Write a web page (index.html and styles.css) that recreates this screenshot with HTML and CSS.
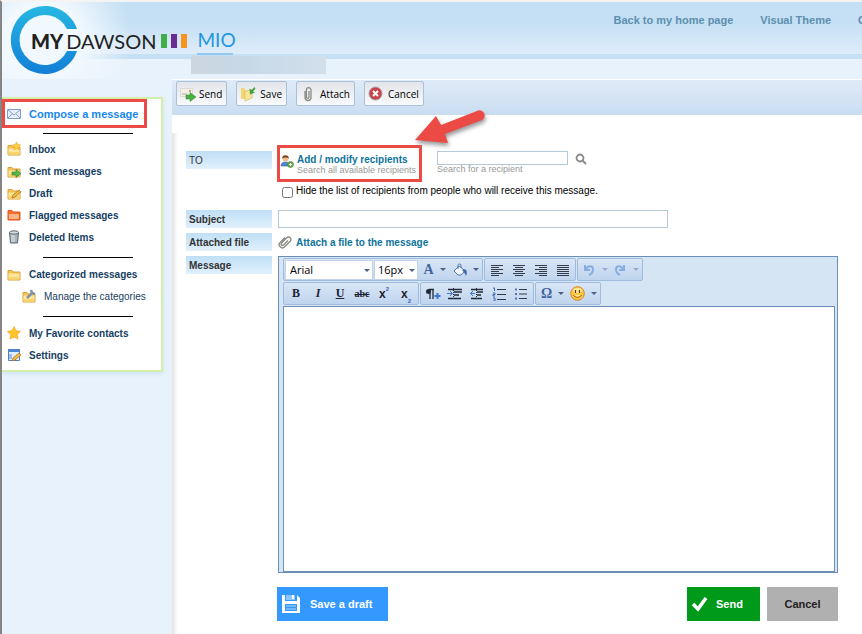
FILE: index.html
```html
<!DOCTYPE html>
<html lang="en">

<head>
  <meta charset="UTF-8">
  <title>MIO</title>
  <link rel="stylesheet" href="styles.css">
</head>

<body>
  <!-- shared icons -->
  <svg class="defs" width="0" height="0" aria-hidden="true">
    <symbol id="folder" viewBox="0 0 14 14">
      <path d="M1 3.500h4l1 1.500h7v8H1z" fill="#f6c451" stroke="#dba03a" />
      <path d="M1.500 6.500h11v6h-11z" fill="#fde69c" />
      <path d="M2 10h10v2H2z" fill="#f9d36c" />
    </symbol>
    <symbol id="clip" viewBox="0 0 16 16">
      <path d="M5 5v6.500a3 3 0 0 0 6 0V4a2.300 2.300 0 0 0-4.600 0v7a1.300 1.300 0 0 0 2.600 0V5" fill="none" stroke="#8b8b84" stroke-width="1.300" />
    </symbol>
    <symbol id="left" viewBox="0 0 14 14"><path d="M1 2.500h12M1 4.500h8M1 6.500h12M1 8.500h8M1 10.500h12M1 12.500h8" stroke="#333b4a" /></symbol>
    <symbol id="center" viewBox="0 0 14 14"><path d="M1 2.500h12M3 4.500h8M1 6.500h12M3 8.500h8M1 10.500h12M3 12.500h8" stroke="#333b4a" /></symbol>
    <symbol id="right" viewBox="0 0 14 14"><path d="M1 2.500h12M5 4.500h8M1 6.500h12M5 8.500h8M1 10.500h12M5 12.500h8" stroke="#333b4a" /></symbol>
    <symbol id="full" viewBox="0 0 14 14"><path d="M1 2.500h12M1 4.500h12M1 6.500h12M1 8.500h12M1 10.500h12M1 12.500h12" stroke="#333b4a" /></symbol>
    <symbol id="undo" viewBox="0 0 14 14"><path d="M3 2v5h5M3.500 6.500C6 2 11 2.500 11 6.500c0 3-2 4.500-4 5.500" fill="none" stroke="#86aee2" stroke-width="2" /></symbol>
  </svg>

  <header class="header">
    <div class="logo">
      <svg class="ring" width="70" height="70" viewBox="0 0 70 70" aria-hidden="true">
        <defs>
          <linearGradient id="ringFill" x1="0" y1="0" x2="0" y2="1">
            <stop offset="0" stop-color="#27b7e3" />
            <stop offset="1" stop-color="#127fd6" />
          </linearGradient>
        </defs>
        <circle cx="34" cy="34" r="26" fill="#f1f8fe" opacity=".6" />
        <path d="M67 23A34 34 0 1 0 67 45H57A25 25 0 1 1 57 23Z" fill="url(#ringFill)" />
      </svg>
      <div class="wordmark">
        <b>MY</b><span>DAWSON</span>
        <i class="bar green"></i><i class="bar purple"></i><i class="bar orange"></i>
      </div>
    </div>
    <div class="app">
      <h1 class="app-name">MIO</h1>
      <div class="user"></div>
    </div>
    <nav class="top-nav">
      <a href="#">Back to my home page</a>
      <a href="#">Visual Theme</a>
      <a href="#">C</a>
    </nav>
  </header>

  <div class="layout">
    <aside class="sidebar">
      <a class="item compose" href="#">
        <svg width="14" height="14" viewBox="0 0 14 14"><path d="M.5 2.500h13v9H.5z" fill="#e6effa" stroke="#7f9fca" /><path d="M1 3l6 5 6-5M1 11l4-4M13 11L9 7" fill="none" stroke="#7f9fca" /></svg>
        Compose a message
      </a>
      <hr>
      <a class="item" href="#">
        <svg width="14" height="14"><use href="#folder" /><path d="M9.500 0l1.300 2.500 2.900.4-2.100 2 .5 2.900-2.600-1.400L7 7.800l.5-2.900-2.100-2 2.900-.4z" fill="#ffd23f" stroke="#e0a020" stroke-width=".5" /></svg>
        Inbox
      </a>
      <a class="item" href="#">
        <svg width="14" height="14"><use href="#folder" /><path d="M5 8h4V5.500l5 4-5 4V11H5z" fill="#55b848" stroke="#2f7d2b" stroke-width=".6" /></svg>
        Sent messages
      </a>
      <a class="item" href="#">
        <svg width="14" height="14"><use href="#folder" /><path d="M5 12l1-3 6-5 2 2-6 5z" fill="#f5b942" stroke="#a86f20" stroke-width=".7" /></svg>
        Draft
      </a>
      <a class="item" href="#">
        <svg width="14" height="14" viewBox="0 0 14 14"><path d="M1 2.500h4l1 1.500h7v8H1z" fill="#f8702d" stroke="#e5531b" /><path d="M2 6h10v5H2z" fill="#ffb58a" /></svg>
        Flagged messages
      </a>
      <a class="item" href="#">
        <svg width="14" height="14" viewBox="0 0 14 14"><path d="M2.500 2.500l1 10.500h7l1-10.500z" fill="#aab4bd" stroke="#5c6670" /><path d="M5 4v8M7 4v8" stroke="#dfe5ea" /><ellipse cx="7" cy="2.500" rx="4.500" ry="1.700" fill="#d5dce2" stroke="#5c6670" /></svg>
        Deleted Items
      </a>
      <hr>
      <a class="item" href="#">
        <svg width="14" height="14"><use href="#folder" /></svg>
        Categorized messages
      </a>
      <a class="item sub" href="#">
        <svg width="14" height="14"><use href="#folder" /><path d="M5 9l5-5M9 1l1 3 3 1" stroke="#8492a3" stroke-width="2.500" fill="none" /></svg>
        Manage the categories
      </a>
      <hr>
      <a class="item" href="#">
        <svg width="14" height="14" viewBox="0 0 14 14"><path d="M7 .5l2 4.200 4.600.6-3.400 3.200.9 4.600L7 10.900l-4.100 2.200.9-4.600L.4 5.300 5 4.700z" fill="#ffc629" stroke="#f0a41c" stroke-width=".7" /></svg>
        My Favorite contacts
      </a>
      <a class="item" href="#">
        <svg width="14" height="14" viewBox="0 0 14 14"><path d="M1.500 1.500h11v11h-11z" fill="#e4eefb" stroke="#4f7fc0" /><path d="M1 1h12v3H1z" fill="#4f86cf" /><path d="M2 6h3v5H2z" fill="#9dbde8" /><path d="M5 13l1-3 6-5 2 2-6 5z" fill="#f5b942" stroke="#a86f20" stroke-width=".7" /></svg>
        Settings
      </a>
    </aside>

    <main class="main">
      <div class="toolbar">
        <button type="button">
          <svg width="16" height="16" viewBox="0 0 16 16"><path d="M.5 2.500h12v8H.5z" fill="#f4f0e6" stroke="#dedacf" /><path d="M9 4h2v2H9z" fill="#b9a97e" /><path d="M2 8h5" stroke="#aaa" /><path d="M6 9h4V6.500l6 4.500-6 4.500V13H6z" fill="#4aae45" stroke="#2e8a2c" stroke-width=".5" /></svg>
          Send
        </button>
        <button type="button" class="wide">
          <svg width="16" height="16" viewBox="0 0 16 16"><path d="M1 2h4v11H1z" fill="#f4d675" /><path d="M5 5l7-1v8l-7 3z" fill="#f8e59c" stroke="#d9b451" stroke-width=".6" /><path d="M14.500 1l-3 3-2-1.500.5 6L15 6.500 13 5.500l2.500-3z" fill="#3fa23b" /></svg>
          Save
        </button>
        <button type="button" class="wide">
          <svg width="16" height="16"><use href="#clip" /></svg>
          Attach
        </button>
        <button type="button" class="wide">
          <svg width="16" height="16" viewBox="0 0 16 16"><circle cx="7.500" cy="7.500" r="6.500" fill="#c9444a" stroke="#a9a0a5" /><path d="M5 5l5 5M10 5l-5 5" stroke="#fff" stroke-width="2" /></svg>
          Cancel
        </button>
      </div>

      <form class="form">
        <div class="label to">TO</div>
        <div class="recipients">
          <div class="recipient-row">
            <a class="add" href="#">
              <svg width="14" height="14" viewBox="0 0 14 14"><path d="M1 12c0-3 2-4 4.500-4S10 9 10 12z" fill="#4d86d1" stroke="#2d5fa5" stroke-width=".6" /><circle cx="5.500" cy="4.500" r="3" fill="#f2bd8c" /><path d="M2 4.500C2 0 9 0 9 4.500 7 3 4 3 2 4.500z" fill="#7b451f" /><circle cx="10.500" cy="10.500" r="3" fill="#6cab4c" stroke="#457f2c" stroke-width=".6" /><path d="M10.500 9v3M9 10.500h3" stroke="#fff" /></svg>
              <span>
                <strong>Add / modify recipients</strong>
                <small>Search all available recipients</small>
              </span>
            </a>
            <svg class="arrow" width="74" height="40" viewBox="0 0 74 40" aria-hidden="true">
              <path d="M1 31L22 7l5 9L63 2a5 5 0 0 1 5 9L31 25l3 9z" fill="#ec4a44" />
            </svg>
            <div class="search">
              <input type="text" id="search">
              <label for="search">Search for a recipient</label>
            </div>
            <button type="button" class="search-button" aria-label="Search">
              <svg width="12" height="12" viewBox="0 0 12 12"><circle cx="5" cy="5" r="3.500" fill="none" stroke="#8b8b8b" stroke-width="1.800" /><path d="M7.500 7.500L11 11" stroke="#8b8b8b" stroke-width="2" /></svg>
            </button>
          </div>
          <label class="hide-list"><input type="checkbox"> Hide the list of recipients from people who will receive this message.</label>
        </div>

        <label class="label" for="subject">Subject</label>
        <div><input class="subject" type="text" id="subject"></div>

        <div class="label">Attached file</div>
        <a class="attach" href="#">
          <svg width="14" height="14" viewBox="0 0 16 16"><g transform="rotate(45 8 8) translate(-1.600 -1.600) scale(1.200)"><use href="#clip" width="16" height="16" /></g></svg>
          Attach a file to the message
        </a>

        <label class="label" for="message">Message</label>
        <div class="editor">
          <div class="tools">
            <div class="group">
              <span class="combo"><select class="font" aria-label="Font"><option>Arial</option></select></span>
              <span class="combo"><select class="size" aria-label="Size"><option>16px</option></select></span>
              <button type="button" class="tool drop"><b class="fore">A</b></button>
              <button type="button" class="tool drop" aria-label="Fill"><svg width="14" height="14" viewBox="0 0 14 14"><path d="M6 3L1 8l4 4h3l4-4z" fill="#f3f7fd" stroke="#5775a8" /><path d="M5 6V2.500a1.500 1.500 0 0 1 3 0V5" fill="none" stroke="#5775a8" /><path d="M9 7c4-2 6 1 4 6-1-2-1-3-4-6z" fill="#4067ac" /></svg></button>
            </div>
            <div class="group">
              <button type="button" class="tool" aria-label="Left"><svg width="14" height="14"><use href="#left" /></svg></button>
              <button type="button" class="tool" aria-label="Center"><svg width="14" height="14"><use href="#center" /></svg></button>
              <button type="button" class="tool" aria-label="Right"><svg width="14" height="14"><use href="#right" /></svg></button>
              <button type="button" class="tool" aria-label="Justify"><svg width="14" height="14"><use href="#full" /></svg></button>
            </div>
            <div class="group">
              <button type="button" class="tool drop off" aria-label="Undo"><svg width="14" height="14"><use href="#undo" /></svg></button>
              <button type="button" class="tool drop off" aria-label="Redo"><svg class="flip" width="14" height="14"><use href="#undo" /></svg></button>
            </div>
          </div>
          <div class="tools">
            <div class="group">
              <button type="button" class="tool"><b>B</b></button>
              <button type="button" class="tool"><b><i>I</i></b></button>
              <button type="button" class="tool"><b><u>U</u></b></button>
              <button type="button" class="tool small"><s>abc</s></button>
              <button type="button" class="tool script">x<sup>2</sup></button>
              <button type="button" class="tool script">x<sub>2</sub></button>
            </div>
            <div class="group">
              <button type="button" class="tool" aria-label="Paragraph"><svg width="16" height="14" viewBox="0 0 16 14"><path d="M5 2v10M8 2v10M4 2.500h5" stroke="#222b3a" stroke-width="1.300" /><circle cx="3.500" cy="4.500" r="2.500" fill="#222b3a" /><path d="M12.500 6v6M9.500 9h6" stroke="#3a76d6" stroke-width="2" /></svg></button>
              <button type="button" class="tool" aria-label="Indent"><svg width="16" height="14" viewBox="0 0 16 14"><path d="M1 2.500h14M7 5h8M7 8h5M1 11.500h13" stroke="#222b3a" stroke-width="1.500" /><path d="M6.500 1v12" stroke="#222b3a" stroke-dasharray="1 1" /><path d="M0 6.500h5M3 4l2.500 2.500L3 9" stroke="#3a76d6" fill="none" /></svg></button>
              <button type="button" class="tool" aria-label="Outdent"><svg width="16" height="14" viewBox="0 0 16 14"><path d="M2 2.500h12M8 5h6M8 8h4M2 11.500h11" stroke="#222b3a" stroke-width="1.500" /><path d="M7.500 1v12" stroke="#222b3a" stroke-dasharray="1 1" /><path d="M1 6.500h5M4 4L1.500 6.500 4 9" stroke="#3a76d6" fill="none" /></svg></button>
              <button type="button" class="tool" aria-label="Numbered list"><svg width="14" height="14" viewBox="0 0 14 14"><path d="M5 2.500h9M5 7.500h9M5 12.500h9" stroke="#333b4a" /><path d="M1 1h1.500v3M1 6h2v1.500H1V9h2M1 11h2v3H1" stroke="#3a66b5" fill="none" /></svg></button>
              <button type="button" class="tool" aria-label="Bullet list"><svg width="14" height="14" viewBox="0 0 14 14"><path d="M5 2.500h8M5 7h8M5 11.500h8" stroke="#333b4a" /><path d="M1 1.500h2v2H1zM1 6h2v2H1zM1 10.500h2v2H1z" fill="#5a73b5" /></svg></button>
            </div>
            <div class="group">
              <button type="button" class="tool drop"><b class="omega">Ω</b></button>
              <button type="button" class="tool drop" aria-label="Smiley"><svg width="15" height="15" viewBox="0 0 15 15"><circle cx="7.500" cy="7.500" r="6.800" fill="#fcc93c" stroke="#d9842a" /><ellipse cx="7.500" cy="4.500" rx="4.500" ry="2.500" fill="#ffe893" /><path d="M5.500 4v3M9.500 4v3" stroke="#5a3a1a" stroke-width="1.200" /><path d="M3.500 9c1 3 7 3 8 0" fill="#ffe893" stroke="#a5541c" /></svg></button>
            </div>
          </div>
          <textarea id="message"></textarea>
        </div>

        <div class="actions">
          <button type="button" class="action draft">
            <svg width="18" height="18" viewBox="0 0 18 18"><path d="M0 0h3v6h12V0l3 3v15H0z" fill="#fff" /><path d="M4 0h9v5H4z" fill="#8cc4ff" /><path d="M10 0h2v4h-2z" fill="#fff" /><path d="M3 9h12v7H3z" fill="#3399ff" /><path d="M4 11h10M4 14h10" stroke="#b5daff" stroke-width="1" /></svg>
            Save a draft
          </button>
          <button type="submit" class="action send">
            <svg width="18" height="16" viewBox="0 0 18 16"><path d="M2 8l5 5L15 2" fill="none" stroke="#fff" stroke-width="3.500" /></svg>
            Send
          </button>
          <button type="button" class="action cancel">Cancel</button>
        </div>
      </form>
    </main>
  </div>
</body>

</html>
```
FILE: styles.css
```css
* {
  box-sizing: border-box;
}

html {
  background: #e7f2fc;
}

body {
  margin: 0;
  min-height: 100vh;
  border-left: 2px solid #858585;
  border-top: 2px solid #f4f4f4;
  font-family: Arial, "Liberation Sans", sans-serif;
  font-size: 10px;
  color: #111;
  display: flex;
  flex-direction: column;
  overflow-x: hidden;
}

a {
  text-decoration: none;
}

button,
input,
select,
textarea {
  font-family: inherit;
  margin: 0;
}

svg {
  flex: none;
  display: block;
}

.defs {
  position: absolute;
}

/* header */
.header {
  display: flex;
  height: 77px;
  background:
    linear-gradient(#c5dff3, #c5dff3) 0 52px / 100% 5px no-repeat,
    linear-gradient(#c5e0f4 40%, #dfecfa) 0 0 / 100% 52px no-repeat,
    #e7f2fc;
}

.logo {
  display: grid;
  padding: 4px 0 0 8px;
  background: radial-gradient(circle at 40px 40px, #f1f8fe 40px, transparent 90px);
}

.ring,
.wordmark {
  grid-area: 1 / 1;
}

.wordmark {
  display: flex;
  align-items: center;
  height: 70px;
  padding-left: 21px;
  font-family: Lato, sans-serif;
  font-size: 20px;
  color: #222;
}

.wordmark b {
  font-weight: 900;
  margin-right: 3px;
}

.wordmark span {
  margin-right: 5px;
}

.bar {
  width: 6px;
  height: 14px;
  margin-right: 4px;
}

.green {
  background: #3fae49;
}

.purple {
  background: #6a2c91;
}

.orange {
  background: #f7941e;
}

.app {
  padding-top: 24px;
}

.app-name {
  width: 36px;
  height: 29px;
  margin: 0 0 1px 6px;
  border-bottom: 2px solid #93c8ef;
  font-family: Lato, sans-serif;
  font-size: 19px;
  line-height: 28px;
  font-weight: 400;
  color: #2196e0;
}

.user {
  width: 135px;
  height: 18px;
  background: linear-gradient(90deg, #ccd6df, #c6d8e7 40%, #d2e0ec);
}

.top-nav {
  display: flex;
  gap: 27px;
  margin: 11px -4px 0 auto;
  white-space: nowrap;
}

.top-nav a {
  font-size: 11px;
  font-weight: bold;
  line-height: 14px;
  color: #5d8fae;
}

/* columns */
.layout {
  display: flex;
  flex: 1;
}

.sidebar {
  flex: none;
  align-self: flex-start;
  width: 161px;
  margin: 18px 9px 0 0;
  padding-bottom: 4px;
  background: #fff;
  border: 2px solid #d3efa8;
  border-left: 0;
  box-shadow: 0 2px 4px #cfe4f3;
}

.item {
  display: flex;
  align-items: center;
  gap: 8px;
  height: 22px;
  padding-left: 5px;
  font-weight: bold;
  color: #153e63;
}

.compose {
  width: 145px;
  height: 29px;
  padding-left: 2px;
  border: 3px solid #ec4a44;
  font-size: 11px;
  color: #1688ee;
}

.sub {
  padding-left: 20px;
  font-weight: normal;
}

.sidebar hr {
  width: 90px;
  margin: 9px 0 5px 41px;
  border: 0;
  border-top: 1px solid #000;
}

.sidebar hr:first-of-type {
  margin-top: 5px;
  margin-bottom: 4px;
}

.main {
  flex: 1;
  min-width: 0;
  background: linear-gradient(90deg, #e4e4e4, #fff) 0 54px / 6px 100% no-repeat, #fff;
}

.toolbar {
  display: flex;
  align-items: flex-start;
  gap: 9px;
  height: 36px;
  padding: 1px 4px;
  border-top: 1px solid #fff;
  background: linear-gradient(#e0ebf8, #c9ddf1);
}

.toolbar button {
  display: flex;
  align-items: center;
  gap: 3px;
  height: 25px;
  padding: 0 4px 0 3px;
  border: 1px solid #abc1da;
  border-radius: 2px;
  background: linear-gradient(#e3e5ea, #f8f9fb);
  font-family: "Open Sans", sans-serif;
  font-size: 10px;
  color: #000;
}

.toolbar .wide {
  gap: 4px;
}

/* message form */
.form {
  display: grid;
  grid-template-columns: 86px 1fr;
  gap: 5px 6px;
  align-items: start;
  padding: 30px 24px 13px 14px;
}

.label {
  height: 18px;
  padding-left: 3px;
  font-weight: bold;
  line-height: 19px;
  color: #333;
  background: linear-gradient(#bfdff6, #e1f0fc);
}

.to {
  margin-top: 6px;
  font-weight: normal;
}

.recipients {
  height: 60px;
}

.recipient-row {
  position: relative;
  display: flex;
  align-items: flex-start;
}

.add {
  display: flex;
  gap: 3px;
  width: 145px;
  height: 37px;
  margin: 0 15px 0 -1px;
  padding: 6px 0 0;
  border: 3px solid #ec4a44;
  white-space: nowrap;
}

.add strong,
.add small {
  display: block;
}

.add strong {
  font-size: 10px;
  line-height: 12px;
  color: #0d739b;
}

.add small {
  font-size: 9px;
  line-height: 8px;
  color: #999;
}

.arrow {
  position: absolute;
  left: 136px;
  top: -36px;
  filter: drop-shadow(1px 3px 2px #999);
}

.search {
  display: flex;
  flex-direction: column;
  width: 131px;
  padding-top: 6px;
}

.search input {
  height: 14px;
  border: 1px solid #b4c8d5;
}

.search label {
  font-size: 9px;
  line-height: 8px;
  color: #999;
}

.search-button {
  margin: 8px 0 0 7px;
  padding: 0;
  border: 0;
  background: none;
}

.hide-list {
  display: flex;
  align-items: center;
  gap: 3px;
  height: 16px;
  color: #000;
}

.hide-list input {
  width: 11px;
  height: 11px;
  margin: 5px 0 0 4px;
}

.subject {
  display: block;
  width: 100%;
  max-width: 390px;
  height: 18px;
  border: 1px solid #b4c8d5;
}

.attach {
  display: flex;
  align-items: center;
  gap: 4px;
  height: 18px;
  font-weight: bold;
  color: #0d739b;
}

/* editor */
.editor {
  padding: 1px 2px 0 4px;
  border: 1px solid #6b8fb5;
  background: #d5e5f4;
}

.tools {
  display: flex;
  gap: 1px;
  height: 24px;
}

.group {
  display: flex;
  align-items: center;
  height: 23px;
  padding: 0 1px;
  border: 1px solid #9fbbdd;
  border-radius: 2px;
  background: linear-gradient(#d9e6f6, #bfd4ee);
}

.combo {
  position: relative;
  margin-right: 1px;
}

.combo select {
  display: block;
  height: 20px;
  padding: 0 4px;
  border: 1px solid #c3d3e8;
  border-radius: 0;
  background: #fff;
  appearance: none;
  font-family: "Open Sans", sans-serif;
  font-size: 11px;
  color: #000;
}

.combo .font {
  width: 88px;
}

.combo .size {
  width: 44px;
  padding: 0 3px;
}

.combo::after,
.drop::after {
  content: "";
  border: 3px solid transparent;
  border-top-color: #4d5f86;
  border-bottom: 0;
}

.combo::after {
  position: absolute;
  right: 3px;
  top: 9px;
}

.tool {
  display: flex;
  align-items: center;
  justify-content: center;
  width: 22px;
  height: 20px;
  padding: 0;
  border: 0;
  background: none;
  font-family: "Liberation Serif", serif;
  font-size: 12px;
  color: #1c2433;
}

.drop {
  width: 31px;
  gap: 6px;
}

.off::after {
  opacity: .4;
}

.flip {
  transform: scaleX(-1);
}

.fore,
.omega {
  font-size: 14px;
  color: #42649f;
}

.small {
  font-size: 10px;
  font-weight: bold;
}

.script {
  font-family: Arial, "Liberation Sans", sans-serif;
  font-weight: bold;
}

.script sup,
.script sub {
  font-size: 6px;
  color: #3a66b5;
}

.script sup {
  align-self: flex-start;
  margin-top: 2px;
}

.script sub {
  align-self: flex-end;
}

.editor textarea {
  display: block;
  width: 100%;
  height: 266px;
  border: 1px solid #6b8fb5;
  resize: none;
}

/* bottom buttons */
.actions {
  grid-column: 2;
  display: flex;
  gap: 7px;
  margin: 9px 0 0 -1px;
}

.action {
  display: flex;
  align-items: center;
  height: 34px;
  border: 0;
  font-size: 11px;
  font-weight: bold;
  color: #fff;
}

.draft {
  gap: 10px;
  width: 111px;
  padding: 0 5px;
  margin-right: auto;
  background: #3399ff;
}

.send {
  gap: 7px;
  width: 73px;
  padding: 0 4px;
  background: #009a1a;
}

.cancel {
  justify-content: center;
  width: 71px;
  background: #b0b0b0;
  color: #222;
}
```
